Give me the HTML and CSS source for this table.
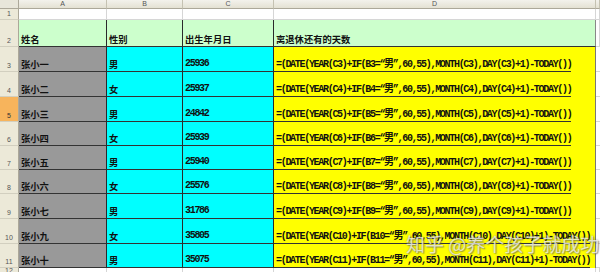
FILE: index.html
```html
<!DOCTYPE html>
<html>
<head>
<meta charset="utf-8">
<link rel="stylesheet" href="styles.css">
</head>
<body>
<div class="sheet">
  <div class="corner"></div>
  <div class="colhead">A</div>
  <div class="colhead">B</div>
  <div class="colhead">C</div>
  <div class="colhead">D</div>
  <div class="colhead tail"></div>

  <div class="rowhead">1</div>
  <div class="blank"></div><div class="blank"></div><div class="blank"></div><div class="blank"></div><div class="blank tail"></div>

  <div class="rowhead">2</div>
  <div class="hd a"><span class="cjk">姓名</span></div>
  <div class="hd b"><span class="cjk">性别</span></div>
  <div class="hd c"><span class="cjk">出生年月日</span></div>
  <div class="hd d"><span class="cjk">离退休还有的天数</span></div>
  <div class="blank tail"></div>

  <div class="rowhead">3</div>
  <div class="cell a"><span class="cjk">张小一</span></div>
  <div class="cell b"><span class="cjk">男</span></div>
  <div class="cell c"><span class="mono">25936</span></div>
  <div class="cell d"><span class="mono f">=(DATE(YEAR(C3)+IF(B3=“男”,60,55),MONTH(C3),DAY(C3)+1)-TODAY())</span></div>
  <div class="cell tail"></div>

  <div class="rowhead">4</div>
  <div class="cell a"><span class="cjk">张小二</span></div>
  <div class="cell b"><span class="cjk">女</span></div>
  <div class="cell c"><span class="mono">25937</span></div>
  <div class="cell d"><span class="mono f">=(DATE(YEAR(C4)+IF(B4=“男”,60,55),MONTH(C4),DAY(C4)+1)-TODAY())</span></div>
  <div class="cell tail"></div>

  <div class="rowhead sel">5</div>
  <div class="cell a"><span class="cjk">张小三</span></div>
  <div class="cell b"><span class="cjk">男</span></div>
  <div class="cell c"><span class="mono">24842</span></div>
  <div class="cell d"><span class="mono f">=(DATE(YEAR(C5)+IF(B5=“男”,60,55),MONTH(C5),DAY(C5)+1)-TODAY())</span></div>
  <div class="cell tail"></div>

  <div class="rowhead">6</div>
  <div class="cell a"><span class="cjk">张小四</span></div>
  <div class="cell b"><span class="cjk">女</span></div>
  <div class="cell c"><span class="mono">25939</span></div>
  <div class="cell d"><span class="mono f">=(DATE(YEAR(C6)+IF(B6=“男”,60,55),MONTH(C6),DAY(C6)+1)-TODAY())</span></div>
  <div class="cell tail"></div>

  <div class="rowhead">7</div>
  <div class="cell a"><span class="cjk">张小五</span></div>
  <div class="cell b"><span class="cjk">男</span></div>
  <div class="cell c"><span class="mono">25940</span></div>
  <div class="cell d"><span class="mono f">=(DATE(YEAR(C7)+IF(B7=“男”,60,55),MONTH(C7),DAY(C7)+1)-TODAY())</span></div>
  <div class="cell tail"></div>

  <div class="rowhead">8</div>
  <div class="cell a"><span class="cjk">张小六</span></div>
  <div class="cell b"><span class="cjk">女</span></div>
  <div class="cell c"><span class="mono">25576</span></div>
  <div class="cell d"><span class="mono f">=(DATE(YEAR(C8)+IF(B8=“男”,60,55),MONTH(C8),DAY(C8)+1)-TODAY())</span></div>
  <div class="cell tail"></div>

  <div class="rowhead">9</div>
  <div class="cell a"><span class="cjk">张小七</span></div>
  <div class="cell b"><span class="cjk">男</span></div>
  <div class="cell c"><span class="mono">31786</span></div>
  <div class="cell d"><span class="mono f">=(DATE(YEAR(C9)+IF(B9=“男”,60,55),MONTH(C9),DAY(C9)+1)-TODAY())</span></div>
  <div class="cell tail"></div>

  <div class="rowhead">10</div>
  <div class="cell a"><span class="cjk">张小九</span></div>
  <div class="cell b"><span class="cjk">女</span></div>
  <div class="cell c"><span class="mono">35805</span></div>
  <div class="cell d"><span class="mono f">=(DATE(YEAR(C10)+IF(B10=“男”,60,55),MONTH(C10),DAY(C10)+1)-TODAY())</span></div>
  <div class="cell tail"></div>

  <div class="rowhead">11</div>
  <div class="cell a"><span class="cjk">张小十</span></div>
  <div class="cell b"><span class="cjk">男</span></div>
  <div class="cell c"><span class="mono">35075</span></div>
  <div class="cell d"><span class="mono f">=(DATE(YEAR(C11)+IF(B11=“男”,60,55),MONTH(C11),DAY(C11)+1)-TODAY())</span></div>
  <div class="cell tail"></div>

  <div class="rowhead top">12</div>
  <div class="blank"></div><div class="blank"></div><div class="blank"></div><div class="blank"></div><div class="blank tail"></div>
</div>
<div class="watermark">知乎 @养个孩子就成功</div>
</body>
</html>
```

FILE: styles.css
```css
html, body {
  margin: 0;
  padding: 0;
  width: 600px;
  height: 272px;
  overflow: hidden;
  background: #ffffff;
}

.sheet {
  display: grid;
  grid-template-columns: 19px 88px 76px 91px 322px 4px;
  grid-template-rows: 9px 11px 27px 25px 25px 25px 24px 24px 24px 25px 25px 24px 10px;
  width: 600px;
}

.sheet > div {
  box-sizing: border-box;
  min-width: 0;
}

.corner {
  background: #e8e6da;
  border-right: 1px solid #aca899;
  border-bottom: 1px solid #aca899;
}

.colhead {
  background: linear-gradient(#f3f2ec, #e4e1d3);
  border-right: 1px solid #c5c2b2;
  border-bottom: 1px solid #aca899;
  font-family: "Liberation Sans", sans-serif;
  font-size: 7px;
  line-height: 8px;
  color: #555;
  text-align: center;
}

.rowhead {
  background: #ece9d8;
  border-right: 1px solid #aca899;
  border-bottom: 1px solid #d2cfbf;
  font-family: "Liberation Sans", sans-serif;
  font-size: 7px;
  color: #555;
  display: flex;
  align-items: flex-end;
  justify-content: center;
  padding-bottom: 2px;
}

.rowhead.sel {
  background: #f7b45c;
  color: #333;
}

.rowhead.top {
  align-items: flex-start;
  padding: 0;
  line-height: 6px;
}

.blank {
  background: #fff;
  border-right: 1px solid #d6d6d6;
  border-bottom: 1px solid #d6d6d6;
}

.hd, .cell {
  display: flex;
  align-items: flex-end;
  padding-left: 2px;
  color: #111;
  white-space: nowrap;
}

.hd {
  background: #ccffcc;
  border-bottom: 1px solid #333;
}

.hd.a { border-right: 1px solid #2a2a2a; }
.hd.b { border-right: 1px solid #2a2a2a; }
.hd.c { border-right: 1px solid #2a2a2a; }
.hd.d { border-right: 1px solid #888; }

.cell.a {
  background: #999999;
  border-right: 1px solid #2a2a2a;
  border-bottom: 1px solid #333;
}

.cell.b {
  background: #00ffff;
  border-right: 1px solid #2a2a2a;
  border-bottom: 1px solid #333;
}

.cell.c {
  background: #00ffff;
  border-right: 1px solid #2a2a2a;
  border-bottom: 1px solid #333;
}

.cell.d {
  background: #ffff00;
  border-right: 1px solid #777;
  padding-left: 0;
  overflow: visible;
}

.cell.tail {
  background: #fff;
  border-bottom: 1px solid #d6d6d6;
  padding: 0;
}

.cjk {
  font-family: "Noto Sans CJK SC", sans-serif;
  font-weight: 700;
  font-size: 9.3px;
  line-height: 11px;
  padding-bottom: 1px;
}

.mono {
  font-family: "Liberation Mono", "Noto Sans CJK SC", monospace;
  font-weight: 700;
  font-size: 10px;
  letter-spacing: -1.3px;
  line-height: 10px;
  padding-bottom: 2px;
}

.mono.f {
  display: inline-block;
  padding-left: 2px;
  padding-bottom: 1px;
  border-bottom: 1px solid #333;
  position: relative;
  z-index: 1;
}

.watermark {
  position: absolute;
  left: 406px;
  top: 232px;
  font-family: "Noto Sans CJK SC", sans-serif;
  font-size: 19px;
  line-height: 24px;
  color: rgba(255, 255, 255, 0.72);
  text-shadow: 0 0 2px rgba(80, 80, 80, 0.6), 1px 1px 1px rgba(90, 90, 90, 0.5);
  white-space: nowrap;
  z-index: 5;
}
```
